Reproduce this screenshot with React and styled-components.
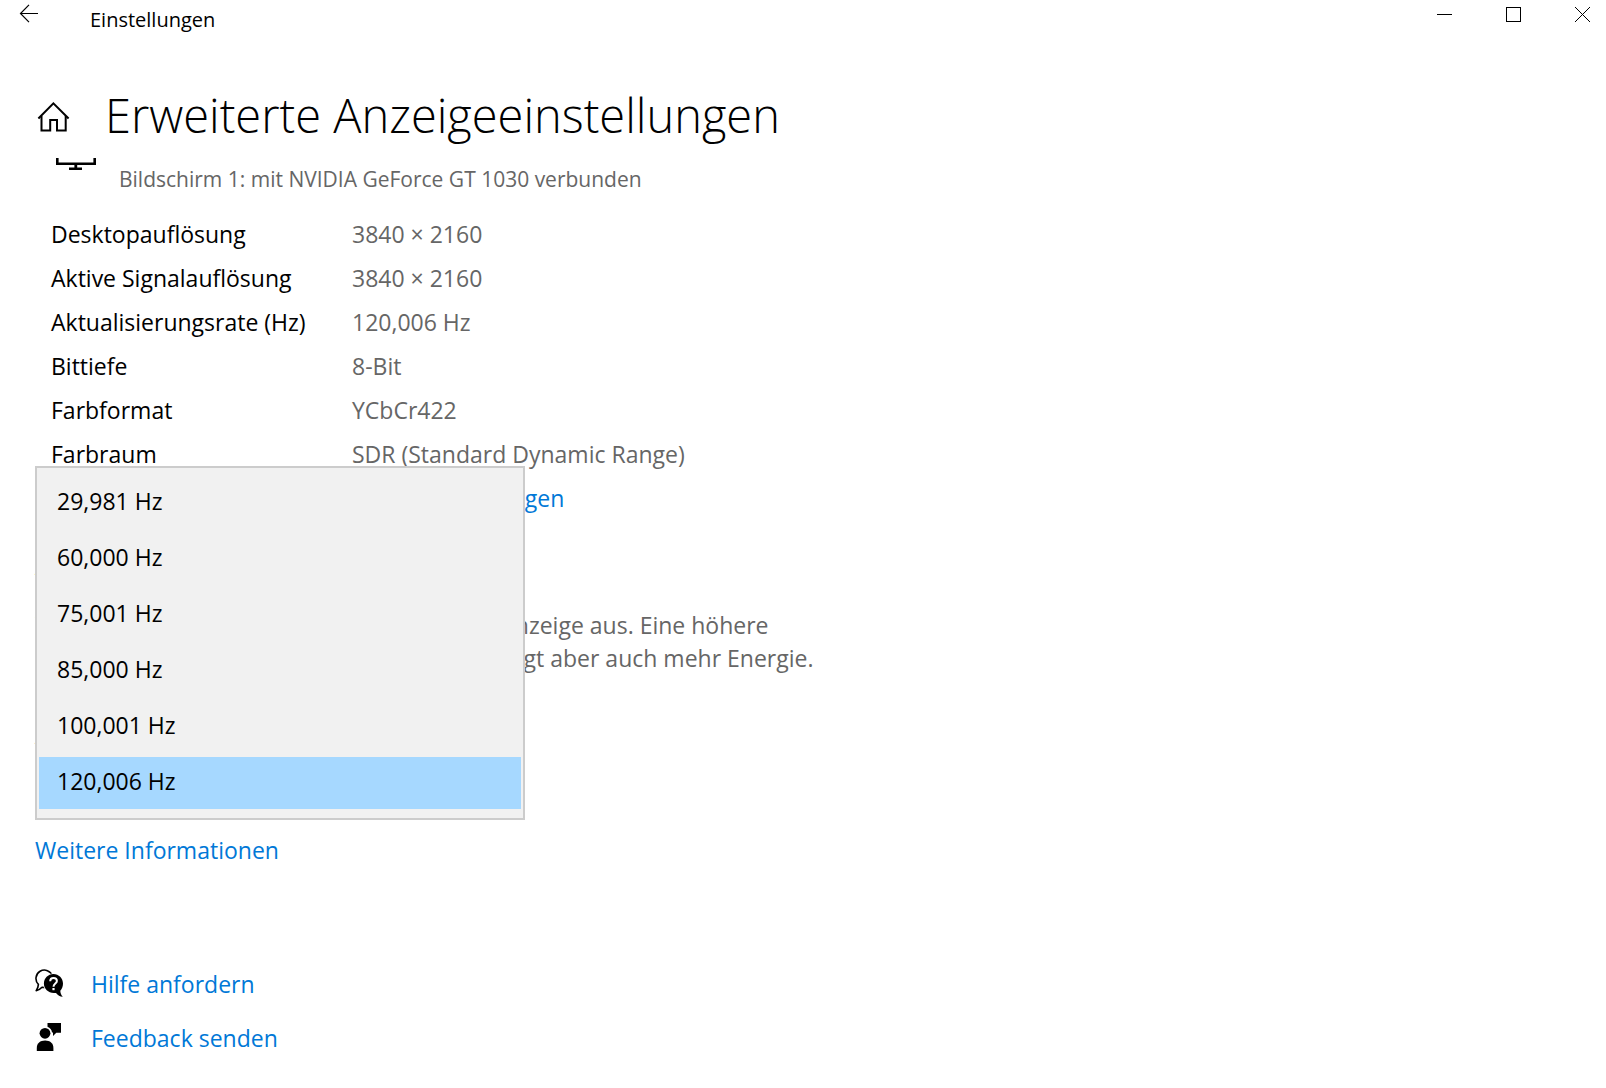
import React, {useState} from "react";
import styled, {createGlobalStyle} from "styled-components";

const displayInfo = [
    {name: "Desktopauflösung", value: "3840 × 2160"},
    {name: "Aktive Signalauflösung", value: "3840 × 2160"},
    {name: "Aktualisierungsrate (Hz)", value: "120,006 Hz"},
    {name: "Bittiefe", value: "8-Bit"},
    {name: "Farbformat", value: "YCbCr422"},
    {name: "Farbraum", value: "SDR (Standard Dynamic Range)"},
];

const rates = ["29,981 Hz", "60,000 Hz", "75,001 Hz", "85,000 Hz", "100,001 Hz", "120,006 Hz"];

function BackIcon() {
    return (
        <svg width="20" height="20" viewBox="0 0 20 20" fill="none" stroke="#000" strokeWidth="1.2">
            <path d="M19 9.5H1.5M10 0.8L1.5 9.5L10 18.1"/>
        </svg>
    );
}

function HomeIcon() {
    return (
        <svg width="40" height="40" viewBox="0 0 40 40" fill="none" stroke="#000" strokeWidth="2">
            <path d="M4.4 23.5L19.4 8.3L34.6 23.5"/>
            <path d="M7.5 21V35.6H16.2V24.9H23V35.6H31.7V21"/>
        </svg>
    );
}

function MonitorIcon() {
    return (
        <svg width="40" height="12" viewBox="0 0 40 12" fill="#000">
            <path d="M0 0H2.6V4.4H37.4V0H40V7H21.2V9.6H26V12H13V9.6H18.4V7H0Z"/>
        </svg>
    );
}

function HelpIcon() {
    return (
        <svg width="28" height="28" viewBox="0 0 28 28">
            <path d="M17.4 7A8.4 8.4 0 1 0 3.4 15.4C3.3 17.8 2.5 19.8 1.2 21.6C3.5 21.1 5.4 20 7 18.2L10 18.4" fill="none" stroke="#000" strokeWidth="1.6" strokeLinejoin="round"/>
            <circle cx="18.4" cy="14.6" r="10.4" fill="#fff"/>
            <path d="M18.4 5C23.8 5 28 9.3 28 14.6C28 17.5 27 19.9 25.3 21.7C25.4 24 26.2 26 27.8 27.8C25 27.6 22.8 26.3 21 23.9C14.4 25.2 8.9 20.4 8.9 14.6C8.9 9.3 13.1 5 18.4 5Z" fill="#000"/>
            <path d="M15.2 12.3C15.2 10 16.5 9 18.5 9C20.5 9 21.9 10.2 21.9 12C21.9 14.6 18.5 14.6 18.5 17.7" fill="none" stroke="#fff" strokeWidth="2"/>
            <rect x="17.4" y="19" width="2.2" height="2.2" fill="#fff"/>
        </svg>
    );
}

function FeedbackIcon() {
    return (
        <svg width="28" height="28" viewBox="0 0 28 28" fill="#000">
            <circle cx="10" cy="10.3" r="5.4"/>
            <path d="M1.8 28V25C1.8 20.3 5.2 17.6 10.1 17.6C15 17.6 18.4 20.3 18.4 25V28Z"/>
            <path d="M12.5 0H26V9.7H21.3L18 13V9.4H17C16.7 6.7 15.1 4.6 12.5 3.7Z"/>
        </svg>
    );
}

function TitleBar() {
    return (
        <Bar>
            <BackButton type="button" aria-label="Zurück"><BackIcon/></BackButton>
            <AppName>Einstellungen</AppName>
            <WindowButtons>
                <WindowButton type="button" aria-label="Minimieren">
                    <svg width="15" height="15" viewBox="0 0 15 15"><path d="M0 7.5H15" stroke="#000"/></svg>
                </WindowButton>
                <WindowButton type="button" aria-label="Maximieren">
                    <svg width="15" height="15" viewBox="0 0 15 15" fill="none">
                        <rect x="0.5" y="0.5" width="14" height="14" stroke="#000"/>
                    </svg>
                </WindowButton>
                <WindowButton type="button" aria-label="Schließen">
                    <svg width="15" height="15" viewBox="0 0 15 15"><path d="M0 0L15 15M15 0L0 15" stroke="#000"/></svg>
                </WindowButton>
            </WindowButtons>
        </Bar>
    );
}

function RatePicker() {
    const [rate, setRate] = useState("120,006 Hz");
    return (
        <Picker>
            <PickerLabel htmlFor="rate">Aktualisierungsrate</PickerLabel>
            <PickerField>
                <RateList id="rate" size={rates.length} value={rate} onChange={(e) => setRate(e.target.value)}>
                    {rates.map((item) => (
                        <option key={item} value={item}>{item}</option>
                    ))}
                </RateList>
            </PickerField>
        </Picker>
    );
}

function App() {
    return (
        <Page>
            <GlobalStyle/>
            <TitleBar/>
            <Header>
                <HomeButton type="button" aria-label="Startseite"><HomeIcon/></HomeButton>
                <Title>Erweiterte Anzeigeeinstellungen</Title>
            </Header>
            <Content>
                <Device>
                    <MonitorIcon/>
                    <DeviceText>Bildschirm 1: mit NVIDIA GeForce GT 1030 verbunden</DeviceText>
                </Device>
                <InfoList>
                    {displayInfo.map((row) => (
                        <InfoRow key={row.name}>
                            <dt>{row.name}</dt>
                            <InfoValue>{row.value}</InfoValue>
                        </InfoRow>
                    ))}
                </InfoList>
                <AdapterLink href="#adapter">Adaptereigenschaften für Bildschirm 1 anzeigen</AdapterLink>
                <Section>
                    <SectionTitle>Aktualisierungsrate</SectionTitle>
                    <Hint>
                        Wählen Sie eine Aktualisierungsrate für die Anzeige aus. Eine höhere
                        <br/>
                        Rate garantiert weichere Bewegungen, benötigt aber auch mehr Energie.
                    </Hint>
                    <RatePicker/>
                    <TextLink href="#info">Weitere Informationen</TextLink>
                </Section>
                <Support>
                    <SupportLink href="#hilfe"><HelpIcon/>Hilfe anfordern</SupportLink>
                    <SupportLink href="#feedback"><FeedbackIcon/>Feedback senden</SupportLink>
                </Support>
            </Content>
        </Page>
    );
}

const GlobalStyle = createGlobalStyle`
  * {
    box-sizing: border-box;
  }
  body {
    margin: 0;
    background: #fff;
    color: #000;
    font-family: "Open Sans", "Noto Sans", sans-serif;
    font-size: 23px;
  }
  svg {
    display: block;
    flex-shrink: 0;
  }
`;

const Page = styled.div`
  min-height: 100vh;
`;

const Bar = styled.header`
  display: flex;
  align-items: flex-start;
`;

const PlainButton = styled.button`
  display: flex;
  align-items: center;
  justify-content: center;
  padding: 0;
  border: 0;
  background: transparent;
`;

const BackButton = styled(PlainButton)`
  width: 58px;
  height: 28px;
`;

const AppName = styled.span`
  margin-left: 32px;
  font-size: 20px;
  line-height: 40px;
`;

const WindowButtons = styled.div`
  display: flex;
  gap: 22px;
  margin-left: auto;
`;

const WindowButton = styled(PlainButton)`
  width: 47px;
  height: 29px;

  &:hover {
    background: #e5e5e5;
  }
`;

const Header = styled.div`
  display: flex;
  align-items: center;
  gap: 31px;
  padding: 42px 34px 10px;
`;

const HomeButton = styled(PlainButton)`
  width: 40px;
`;

const Title = styled.h1`
  margin: 0;
  font-size: 47px;
  font-weight: 300;
  line-height: 66px;
`;

const Content = styled.main`
  padding: 0 35px;
`;

const Device = styled.div`
  display: flex;
  align-items: flex-start;
  gap: 23px;
  padding-left: 21px;
`;

const DeviceText = styled.p`
  margin: 6px 0 18px;
  color: #666;
  font-size: 21px;
  line-height: 30px;
`;

const InfoList = styled.dl`
  margin: 0;
  padding-left: 16px;
`;

const InfoRow = styled.div`
  display: grid;
  grid-template-columns: 301px 1fr;
  line-height: 44px;
`;

const InfoValue = styled.dd`
  margin: 0;
  color: #666;
`;

const TextLink = styled.a`
  display: block;
  width: fit-content;
  color: #0078d7;
  line-height: 44px;
  text-decoration: none;
`;

const AdapterLink = styled(TextLink)`
  margin-left: 16px;
`;

const Section = styled.section`
  padding-top: 22px;
`;

const SectionTitle = styled.h2`
  margin: 0 0 23px;
  font-size: 28px;
  font-weight: 400;
  line-height: 44px;
`;

const Hint = styled.p`
  margin: 0;
  color: #666;
  line-height: 33px;
`;

const Picker = styled.div`
  margin: 38px 0 19px;
`;

const PickerLabel = styled.label`
  display: block;
  line-height: 44px;
`;

const PickerField = styled.div`
  position: relative;
  width: 490px;
  max-width: 100%;
  height: 52px;
`;

const RateList = styled.select`
  position: absolute;
  bottom: -11px;
  left: 0;
  width: 100%;
  height: 354px;
  padding: 9px 2px;
  border: 2px solid #ccc;
  border-radius: 0;
  outline: none;
  background: #f1f1f1;
  color: #000;
  font: inherit;
  overflow: hidden;

  option {
    min-height: 52px;
    margin-bottom: 4px;
    padding: 8px 18px;
    color: #000;
  }

  option:checked {
    background: #a6d8ff linear-gradient(#a6d8ff, #a6d8ff);
    color: #000;
  }
`;

const Support = styled.nav`
  margin-top: 85px;
`;

const SupportLink = styled(TextLink)`
  display: flex;
  align-items: center;
  gap: 28px;
  line-height: 54px;

  svg {
    margin-bottom: 2px;
  }
`;

export default App;
